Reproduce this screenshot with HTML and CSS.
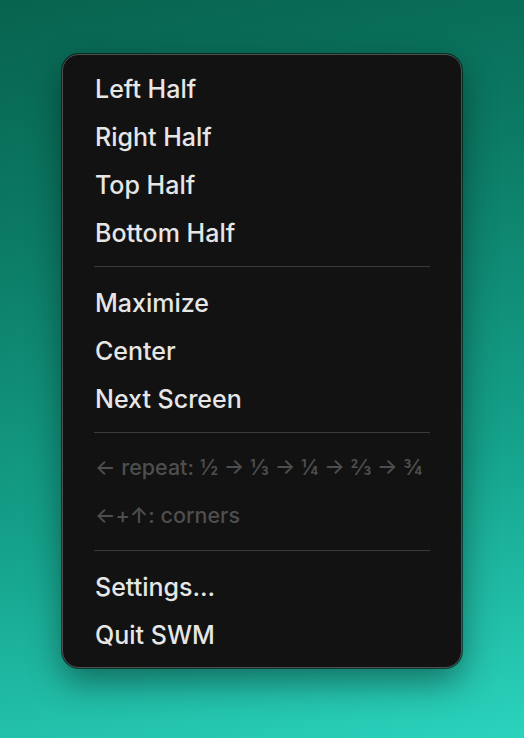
FILE: index.html
```html
<!DOCTYPE html>
<html lang="en">
<head>
<meta charset="utf-8">
<title>SWM menu</title>
<link rel="stylesheet" href="styles.css">
</head>
<body>
<div class="desk">
  <nav class="menu">
    <div class="group">
      <div class="item">Left Half</div>
      <div class="item">Right Half</div>
      <div class="item">Top Half</div>
      <div class="item">Bottom Half</div>
    </div>
    <div class="sep"></div>
    <div class="group">
      <div class="item">Maximize</div>
      <div class="item">Center</div>
      <div class="item">Next Screen</div>
    </div>
    <div class="sep"></div>
    <div class="group">
      <div class="item hint">← repeat: ½ → ⅓ → ¼ → ⅔ → ¾</div>
      <div class="item hint">←+↑: corners</div>
    </div>
    <div class="sep"></div>
    <div class="group">
      <div class="item">Settings...</div>
      <div class="item">Quit SWM</div>
    </div>
  </nav>
</div>
</body>
</html>
```
FILE: styles.css
```css
html, body {
  margin: 0;
  padding: 0;
  height: 100%;
}
body {
  background: linear-gradient(168deg, #07634e 0%, #0c7c66 30%, #15a28b 65%, #2bd3bd 100%);
  font-family: Inter, "Noto Sans", "Liberation Sans", sans-serif;
}
.desk {
  padding: 54px 0 0 62px;
}
.menu {
  box-sizing: border-box;
  width: 400px;
  padding: 10px 0 8px 0;
  background: #121212;
  border: 1px solid #4e5050;
  border-radius: 17px;
  box-shadow: 0 0 0 1px rgba(0, 0, 0, 0.55), 0 14px 34px rgba(0, 0, 0, 0.42);
}
.item {
  height: 48px;
  line-height: 48px;
  padding: 0 32px;
  font-size: 25px;
  font-weight: 500;
  color: #e6e6e6;
  white-space: nowrap;
}
.hint {
  font-size: 21.5px;
  line-height: 44px;
  color: #4e4e4e;
}
.sep {
  height: 1px;
  margin: 9px 31px 12px 31px;
  background: #3a3a3a;
}
```
